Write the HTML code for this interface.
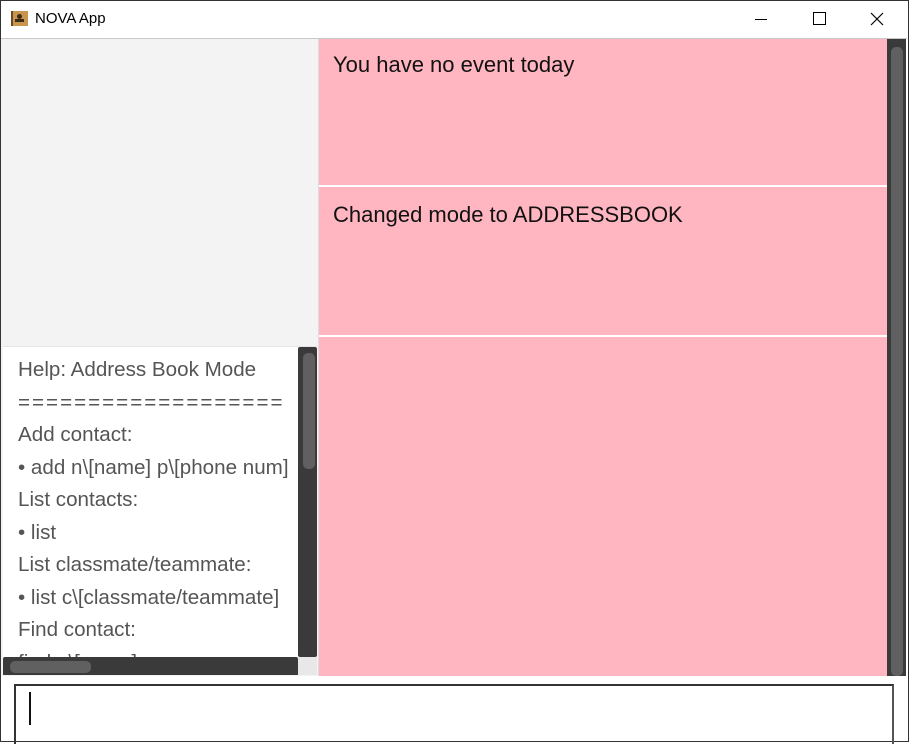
<!DOCTYPE html>
<html><head><style>
body{margin:0;width:909px;height:742px;overflow:hidden;background:#fff;font-family:"Liberation Sans",sans-serif;position:relative}
.a{position:absolute}
.win{left:0;top:0;width:907px;height:740px;border:1px solid #333}
.help div{height:32.5px;line-height:32.5px;font-size:20.6px;color:#555;white-space:nowrap}
</style></head><body>
<div class="a win"></div>
<div class="a" style="left:11px;top:11px;width:17px;height:15px;background:#c9954c;border-left:2px solid #6b4a25;box-sizing:border-box"></div>
<div class="a" style="left:17px;top:14px;width:5px;height:5px;background:#3b2a15;border-radius:50%"></div>
<div class="a" style="left:15px;top:19px;width:9px;height:3px;background:#3b2a15"></div>
<div class="a" style="left:35px;top:10px;font-size:15px;color:#000">NOVA App</div>
<div class="a" style="left:755px;top:19px;width:12px;height:1px;background:#000"></div>
<div class="a" style="left:813px;top:12px;width:11px;height:11px;border:1px solid #000"></div>
<svg class="a" style="left:870px;top:12px" width="14" height="14"><path d="M1 1L13 13M13 1L1 13" stroke="#000" stroke-width="1.2"/></svg>
<div class="a" style="left:1px;top:38px;width:906px;height:1px;background:#c8c8c8"></div>
<div class="a" style="left:1px;top:39px;width:318px;height:637px;background:#f3f3f3"></div>
<div class="a" style="left:318px;top:39px;width:1px;height:637px;background:#ddd"></div>
<div class="a" style="left:319px;top:39px;width:568px;height:637px;background:#ffb6c1"></div>
<div class="a" style="left:319px;top:185px;width:568px;height:2px;background:#fff"></div>
<div class="a" style="left:319px;top:335px;width:568px;height:2px;background:#fff"></div>
<div class="a" style="left:333px;top:52px;font-size:22px;color:#111">You have no event today</div>
<div class="a" style="left:333px;top:202px;font-size:22px;color:#111">Changed mode to ADDRESSBOOK</div>
<div class="a" style="left:887px;top:39px;width:19px;height:637px;background:#3a3a3a"></div>
<div class="a" style="left:891px;top:47px;width:12px;height:629px;background:#606060;border-radius:5px"></div>
<div class="a" style="left:3px;top:346px;width:314px;height:329px;background:#fff;overflow:hidden;border-top:1px solid #e4e4e4;box-sizing:border-box">
 <div class="help a" style="left:15px;top:7px">
  <div>Help: Address Book Mode</div><div style="letter-spacing:2px">===================</div><div>Add contact:</div><div>• add n\[name] p\[phone num]</div><div>List contacts:</div><div>• list</div><div>List classmate/teammate:</div><div>• list c\[classmate/teammate]</div><div>Find contact:</div><div>find n\[name]</div>
 </div>
 <div class="a" style="left:295px;top:0;width:19px;height:310px;background:#3a3a3a;border-radius:2px"></div>
 <div class="a" style="left:300px;top:6px;width:12px;height:116px;background:#606060;border-radius:5px"></div>
 <div class="a" style="left:0;top:310px;width:295px;height:19px;background:#3a3a3a;border-radius:2px"></div>
 <div class="a" style="left:7px;top:314px;width:81px;height:12px;background:#606060;border-radius:5px"></div>
 <div class="a" style="left:295px;top:310px;width:19px;height:19px;background:#e8e8e8"></div>
</div>
<div class="a" style="left:14px;top:684px;width:880px;height:60px;border-top:2px solid #333;border-left:2px solid #333;border-right:2px solid #555;box-sizing:border-box"></div>
<div class="a" style="left:29px;top:692px;width:2px;height:33px;background:#111"></div>
</body></html>
